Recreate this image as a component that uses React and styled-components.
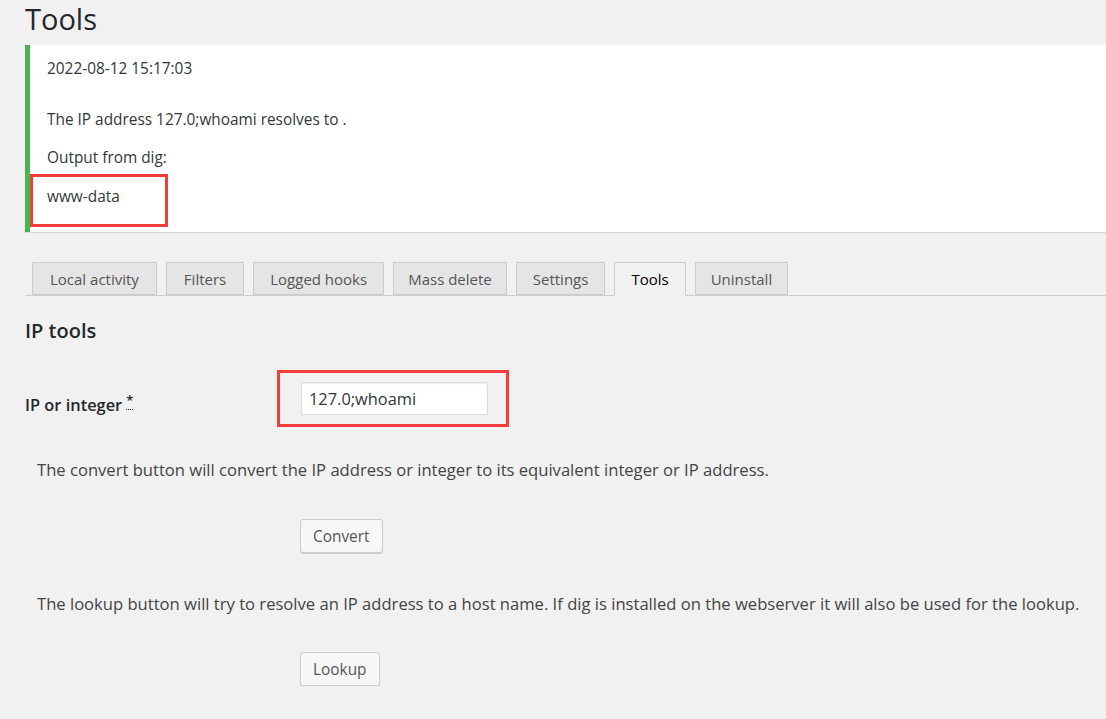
import { createGlobalStyle, styled } from "styled-components";

const Global = createGlobalStyle`
    html, body {
        margin: 0;
        background: #f1f1f1;
        overflow: hidden;
    }
    body {
        font-family: "Open Sans", "Liberation Sans", sans-serif;
        color: #444;
        font-size: 15px;
    }
`

const Page = styled.div`
    padding-left: 25px;
    width: 1106px;
    box-sizing: border-box;
`

const Title = styled.h1`
    margin: 0;
    padding-top: 1px;
    font-size: 29px;
    font-weight: 400;
    line-height: 36px;
    color: #23282d;
`

const Notice = styled.div`
    margin-top: 8px;
    background: #fff;
    border-left: 5px solid #46b450;
    box-shadow: 0 1px 1px rgba(0, 0, 0, 0.1);
    padding: 14px 17px 6px;
    height: 187px;
    box-sizing: border-box;
`

const NoticeLine = styled.p`
    margin: 0 0 ${p => p.$gap ?? 18}px;
    font-size: 15.4px;
    line-height: 20px;
    color: #32373c;
`

const Highlight = styled.div`
    display: inline-block;
    margin: -13px 0 0 -17px;
    padding: 10px 45px 17px 14px;
    border: 3px solid #f23d3d;
`

const TabBar = styled.div`
    display: flex;
    gap: 9px;
    margin-top: 30px;
    padding-left: 7px;
    border-bottom: 1px solid #ccc;
    height: 33px;
`

const Tab = styled.div`
    padding: 0 ${p => p.$pad}px;
    line-height: 32px;
    font-size: 15px;
    color: ${p => (p.$active ? "#000" : "#555")};
    background: ${p => (p.$active ? "#f1f1f1" : "#e5e5e5")};
    border: 1px solid #ccc;
    border-bottom-color: ${p => (p.$active ? "#f1f1f1" : "#ccc")};
    margin-bottom: ${p => (p.$active ? "-1px" : "0")};
    height: ${p => (p.$active ? "34px" : "33px")};
    box-sizing: border-box;
`

const Heading = styled.h2`
    margin: 22px 0 0;
    font-size: 20px;
    font-weight: 600;
    line-height: 26px;
    color: #23282d;
`

const FieldRow = styled.div`
    display: grid;
    grid-template-columns: 252px auto;
    align-items: center;
    margin-top: 26px;
`

const Label = styled.label`
    font-size: 16.4px;
    font-weight: 600;
    color: #23282d;
    padding-top: 12px;
`

const Star = styled.sup`
    font-size: 13px;
    margin-left: 4px;
    border-bottom: 1px dotted #23282d;
    line-height: 1;
`

const InputFrame = styled.div`
    width: 232px;
    height: 57px;
    border: 3px solid #f23d3d;
    box-sizing: border-box;
    display: flex;
    align-items: center;
    padding-left: 21px;
`

const Input = styled.input`
    width: 187px;
    height: 33px;
    box-sizing: border-box;
    border: 1px solid #ddd;
    box-shadow: inset 0 1px 2px rgba(0, 0, 0, 0.07);
    background: #fff;
    font-family: inherit;
    font-size: 16.4px;
    color: #32373c;
    padding: 0 7px;
    outline: none;
`

const Description = styled.p`
    margin: ${p => p.$top}px 0 0 12px;
    font-size: 16.6px;
    line-height: 22px;
    color: #444;
    white-space: nowrap;
`

const ButtonRow = styled.div`
    padding-left: 275px;
    margin-top: ${p => p.$top}px;
`

const Button = styled.button`
    height: 34px;
    padding: 0 12px;
    font-family: inherit;
    font-size: 15.4px;
    color: #555;
    background: #f7f7f7;
    border: 1px solid #ccc;
    border-radius: 3px;
    box-shadow: 0 1px 0 #ccc;
    cursor: pointer;
`

const tabs = [
    { label: "Local activity", pad: 17 },
    { label: "Filters", pad: 17 },
    { label: "Logged hooks", pad: 16 },
    { label: "Mass delete", pad: 14 },
    { label: "Settings", pad: 16 },
    { label: "Tools", pad: 16 },
    { label: "Uninstall", pad: 15 },
];

export default function App() {
    return (
        <Page>
            <Global />
            <Title>Tools</Title>
            <Notice>
                <NoticeLine $gap={31}>2022-08-12 15:17:03</NoticeLine>
                <NoticeLine>The IP address 127.0;whoami resolves to .</NoticeLine>
                <NoticeLine>Output from dig:</NoticeLine>
                <Highlight>
                    <NoticeLine $gap={0}>www-data</NoticeLine>
                </Highlight>
            </Notice>
            <TabBar>
                {tabs.map(t => (
                    <Tab key={t.label} $pad={t.pad} $active={t.label === "Tools"}>{t.label}</Tab>
                ))}
            </TabBar>
            <Heading>IP tools</Heading>
            <FieldRow>
                <Label>IP or integer<Star>*</Star></Label>
                <InputFrame>
                    <Input defaultValue="127.0;whoami" />
                </InputFrame>
            </FieldRow>
            <Description $top={32}>
                The convert button will convert the IP address or integer to its equivalent integer or IP address.
            </Description>
            <ButtonRow $top={38}>
                <Button>Convert</Button>
            </ButtonRow>
            <Description $top={40}>
                The lookup button will try to resolve an IP address to a host name. If dig is installed on the webserver it will also be used for the lookup.
            </Description>
            <ButtonRow $top={37}>
                <Button>Lookup</Button>
            </ButtonRow>
        </Page>
    )
}
